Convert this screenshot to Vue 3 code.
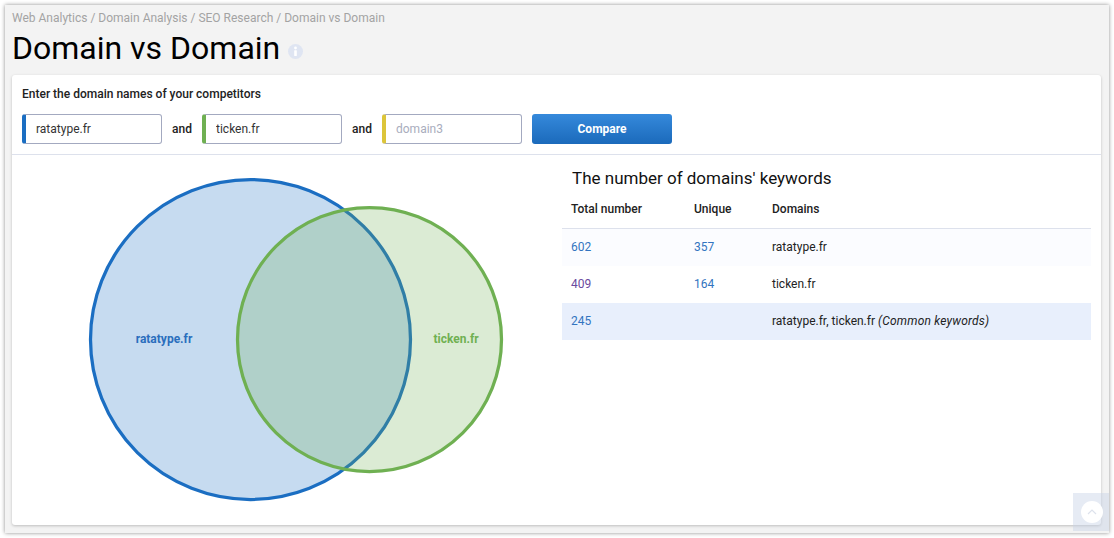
<script setup>
const inputs = [
  { value: 'ratatype.fr', color: 'blue' },
  { value: 'ticken.fr', color: 'green' },
  { value: '', placeholder: 'domain3', color: 'yellow' }
]
const rows = [
  { total: '602', unique: '357', domains: 'ratatype.fr', tint: 'soft', visited: false },
  { total: '409', unique: '164', domains: 'ticken.fr', tint: '', visited: true },
  { total: '245', unique: '', domains: 'ratatype.fr, ticken.fr', note: '(Common keywords)', tint: 'strong', visited: false }
]
</script>

<template>
  <div class="page">
    <div class="frame">
      <div class="crumbs">Web Analytics / Domain Analysis / SEO Research / Domain vs Domain</div>
      <div class="title-row">
        <h1>Domain vs Domain</h1>
        <svg class="info" width="15" height="15" viewBox="0 0 15 15">
          <circle cx="7.5" cy="7.5" r="7.5" fill="#dfe5f2" />
          <circle cx="7.5" cy="4" r="1.4" fill="#fff" />
          <rect x="6.2" y="6.2" width="2.6" height="5.8" rx=".5" fill="#fff" />
        </svg>
      </div>
      <div class="card">
        <div class="form">
          <div class="form-label">Enter the domain names of your competitors</div>
          <div class="form-row">
            <template v-for="(item, i) in inputs" :key="i">
              <span v-if="i" class="and">and</span>
              <input class="domain" :class="item.color" :value="item.value" :placeholder="item.placeholder" />
            </template>
            <button class="compare">Compare</button>
          </div>
        </div>
        <div class="results">
          <svg class="venn" width="550" height="370" viewBox="0 0 550 370">
            <circle cx="238.5" cy="184.5" r="160" fill="#1b6ec2" fill-opacity=".25" stroke="#1b6ec2" stroke-width="3.25" />
            <circle cx="357.5" cy="184.5" r="132" fill="#6fb052" fill-opacity=".25" stroke="#6fb052" stroke-width="3.25" />
            <text x="152" y="187.5" text-anchor="middle" class="venn-label" fill="#2a6ebd">ratatype.fr</text>
            <text x="444" y="187.5" text-anchor="middle" class="venn-label" fill="#6fb052">ticken.fr</text>
          </svg>
          <div class="stats">
            <h2>The number of domains' keywords</h2>
            <table>
              <thead>
                <tr>
                  <th class="c1">Total number</th>
                  <th class="c2">Unique</th>
                  <th>Domains</th>
                </tr>
              </thead>
              <tbody>
                <tr v-for="row in rows" :key="row.total" :class="row.tint">
                  <td><a :class="{ visited: row.visited }">{{ row.total }}</a></td>
                  <td><a>{{ row.unique }}</a></td>
                  <td>{{ row.domains }}<em v-if="row.note">{{ row.note }}</em></td>
                </tr>
              </tbody>
            </table>
          </div>
        </div>
      </div>
    </div>
    <div class="to-top">
      <span class="to-top-circle">
        <svg width="10" height="6" viewBox="0 0 10 6"><path d="M1 5l4-4 4 4" fill="none" stroke="#dde2ec" stroke-width="1.2" /></svg>
      </span>
    </div>
  </div>
</template>

<style scoped>
.page {
  width: 1114px;
  height: 538px;
  padding: 5px;
  box-sizing: border-box;
  background: #fff;
  font-family: Roboto, sans-serif;
  position: relative;
  overflow: hidden;
}
.frame {
  height: 528px;
  box-sizing: border-box;
  padding: 6px 8px 8px 7px;
  background: #f3f3f3;
  box-shadow: 0 0 4px rgba(0, 0, 0, .45);
}
.crumbs {
  font-size: 12px;
  line-height: 14px;
  color: #a3a3a3;
}
.title-row {
  display: flex;
  align-items: center;
  gap: 8px;
  height: 50px;
}
h1 {
  margin: 0 0 4px;
  font-size: 32px;
  font-weight: 400;
  line-height: 48px;
  color: #000;
}
.info {
  margin-top: 3px;
}
.card {
  height: 450px;
  background: #fff;
  border-radius: 3px;
  box-shadow: 0 1px 3px rgba(0, 0, 0, .22);
}
.form {
  height: 80px;
  padding: 12px 10px 0;
  box-sizing: border-box;
  border-bottom: 1px solid #dde1ec;
}
.form-label {
  font-size: 12px;
  font-weight: 500;
  line-height: 14px;
  color: #222;
}
.form-row {
  display: flex;
  align-items: center;
  margin-top: 13px;
}
.domain {
  width: 140px;
  height: 30px;
  box-sizing: border-box;
  padding: 0 10px;
  border: 1px solid #a3a9c0;
  border-left-width: 4px;
  border-radius: 3px;
  outline: none;
  font: 400 12px Roboto, sans-serif;
  color: #333;
  background: #fff;
}
.domain::placeholder {
  color: #a9adbd;
  opacity: 1;
}
.domain.blue { border-left-color: #1b6ec2; }
.domain.green { border-left-color: #6fb052; }
.domain.yellow { border-left-color: #dcc53a; }
.and {
  width: 40px;
  text-align: center;
  font-size: 12px;
  font-weight: 500;
  color: #222;
}
.compare {
  width: 140px;
  height: 30px;
  margin-left: 10px;
  border: 0;
  border-radius: 3px;
  background: linear-gradient(#3589db, #1b6abb);
  color: #fff;
  font: 700 12px Roboto, sans-serif;
}
.results {
  display: flex;
  height: 370px;
}
.venn {
  flex: none;
}
.venn-label {
  font: 700 12px Roboto, sans-serif;
}
.stats {
  width: 529px;
}
h2 {
  margin: 13px 0 0 10px;
  font-size: 17px;
  font-weight: 400;
  line-height: 20px;
  color: #111;
}
table {
  width: 100%;
  margin-top: 2px;
  border-collapse: collapse;
  font-size: 12px;
  color: #222;
}
th {
  height: 38px;
  padding: 0 9px;
  box-sizing: border-box;
  border-bottom: 1px solid #dde1ec;
  text-align: left;
  font-weight: 500;
  color: #222;
}
.c1 { width: 123px; }
.c2 { width: 78px; }
td {
  height: 37px;
  padding: 0 9px 2px;
  box-sizing: border-box;
}
a { color: #3274c0; }
a.visited { color: #6a4a9e; }
tr.soft td {
  height: 38px;
  padding-bottom: 1px;
  background: #fbfcff;
}
tr.strong td { background: #e8effc; }
em {
  margin-left: 3px;
  font-style: italic;
  letter-spacing: .2px;
}
.to-top {
  position: absolute;
  left: 1073px;
  top: 493px;
  width: 36px;
  height: 38px;
  padding-left: 2px;
  box-sizing: border-box;
  background: rgba(200, 210, 230, .45);
  display: flex;
  align-items: center;
  justify-content: center;
}
.to-top-circle {
  width: 22px;
  height: 22px;
  border-radius: 50%;
  background: #fff;
  display: flex;
  align-items: center;
  justify-content: center;
}
</style>
